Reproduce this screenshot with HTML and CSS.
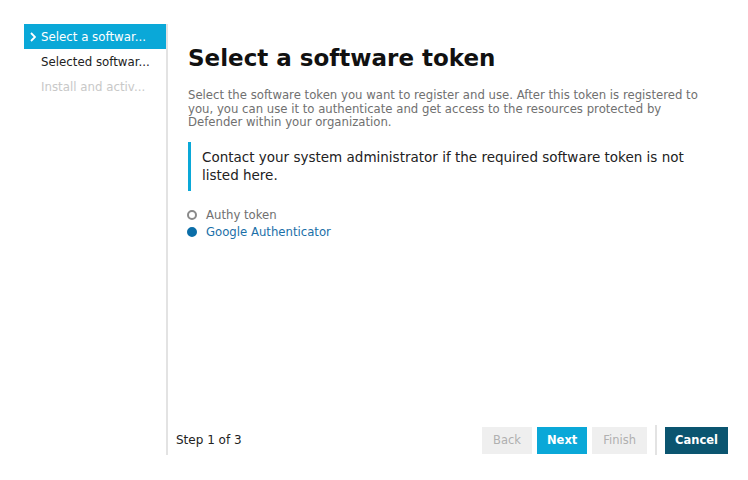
FILE: index.html
```html
<!DOCTYPE html>
<html>
<head>
<meta charset="utf-8">
<link rel="stylesheet" href="styles.css">
</head>
<body>
<div class="wizard">
  <nav class="steps">
    <div class="step active"><svg class="chev" width="6" height="10" viewBox="0 0 6 10"><path d="M1 1 L5 5 L1 9" fill="none" stroke="#fff" stroke-width="1.8"/></svg><span class="label">Select a softwar...</span></div>
    <div class="step"><span class="label">Selected softwar...</span></div>
    <div class="step disabled"><span class="label">Install and activ...</span></div>
  </nav>
  <main class="content">
    <div class="body">
      <h1 class="title">Select a software token</h1>
      <p class="desc">Select the software token you want to register and use. After this token is registered to you, you can use it to authenticate and get access to the resources protected by Defender within your organization.</p>
      <div class="callout">Contact your system administrator if the required software token is not listed here.</div>
      <ul class="options">
        <li class="option"><span class="radio"></span>Authy token</li>
        <li class="option selected"><span class="radio"></span>Google Authenticator</li>
      </ul>
    </div>
    <footer class="footer">
      <span class="stepcount">Step 1 of 3</span>
      <div class="buttons">
        <button class="btn off">Back</button>
        <button class="btn primary">Next</button>
        <button class="btn off">Finish</button>
        <span class="sep"></span>
        <button class="btn dark">Cancel</button>
      </div>
    </footer>
  </main>
</div>
</body>
</html>
```

FILE: styles.css
```css
html, body {
  margin: 0;
  padding: 0;
  background: #fff;
}
body {
  font-family: "DejaVu Sans", Verdana, sans-serif;
  color: #333;
}
.wizard {
  display: flex;
  margin: 24px 0 0 24px;
  height: 431px;
  width: 704px;
}
.steps {
  width: 142px;
  border-right: 2px solid #e3e3e3;
  flex-shrink: 0;
}
.step {
  height: 25px;
  display: flex;
  align-items: center;
  font-size: 11.8px;
  color: #222;
  padding-left: 17px;
  white-space: nowrap;
  padding-top: 1px;
  box-sizing: border-box;
}
.step.active {
  background: #0aa8d8;
  color: #fff;
  padding-left: 6px;
}
.chev {
  width: 6px;
  height: 10px;
  margin: -1px 5px 0 0;
  flex-shrink: 0;
}
.step.disabled {
  color: #c8c8c8;
}
.content {
  flex: 1;
  display: flex;
  flex-direction: column;
  justify-content: space-between;
}
.body {
  padding-left: 20px;
}
.title {
  font-size: 23px;
  font-weight: bold;
  color: #111;
  margin: 20px 0 0 0;
  line-height: 28px;
}
.desc {
  font-size: 11.7px;
  line-height: 13.5px;
  color: #707070;
  margin: 17px 0 0 0;
  width: 530px;
}
.callout {
  margin-top: 12px;
  border-left: 3px solid #0aa8d8;
  padding: 6px 0 7px 11px;
  font-size: 13.5px;
  line-height: 18px;
  color: #222;
  width: 510px;
}
.options {
  list-style: none;
  margin: 16px 0 0 0;
  padding: 0;
}
.option {
  display: flex;
  align-items: center;
  font-size: 11.7px;
  line-height: 17px;
  color: #707070;
}
.option.selected {
  color: #1a6fa8;
}
.radio {
  width: 6px;
  height: 6px;
  border: 2px solid #8a8a8a;
  border-radius: 50%;
  margin-right: 9px;
  margin-left: -1px;
}
.option.selected .radio {
  border-color: #0b6ea8;
  background: #0b6ea8;
}
.footer {
  display: flex;
  align-items: center;
  justify-content: space-between;
  padding-left: 8px;
  margin-bottom: 0;
}
.stepcount {
  font-size: 12px;
  color: #222;
}
.buttons {
  display: flex;
  align-items: center;
  gap: 5px;
}
.btn {
  font-family: "DejaVu Sans", Verdana, sans-serif;
  font-size: 11.5px;
  height: 27px;
  border: none;
  padding: 0 11px;
  background: #efefef;
  color: #b0b0b0;
}
.btn.primary {
  background: #0aa8d8;
  color: #fff;
  font-weight: bold;
  padding: 0 10px;
}
.btn.dark {
  background: #0b5570;
  color: #fff;
  font-weight: bold;
  padding: 0 10px;
}
.sep {
  width: 2px;
  height: 30px;
  background: #e3e3e3;
  margin: 0 3px;
}
```
